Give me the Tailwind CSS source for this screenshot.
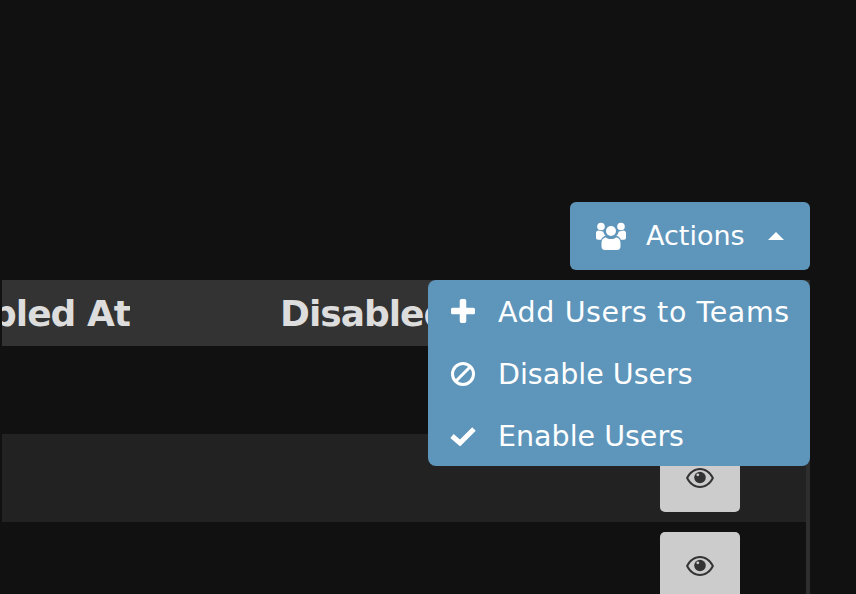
<!DOCTYPE html>
<html lang="en">
<head>
    <meta charset="UTF-8">
    <title>Users</title>
    <script src="https://cdn.jsdelivr.net/npm/@tailwindcss/browser@4"></script>
</head>
<body class="bg-[#111111] font-['DejaVu_Sans',sans-serif]">
    <div class="relative h-[594px] w-[856px] overflow-hidden pl-[2px] pr-[46px]">
        <!-- Toolbar -->
        <div class="flex justify-end pt-[202px] pb-[10px]">
            <button class="flex h-[68px] w-[240px] items-center rounded-[6px] bg-[#5e95bb] pl-[26px] text-[27px] text-white">
                <svg class="h-[28px] w-[30px]" viewBox="0 0 30 28" fill="currentColor">
                    <circle cx="5" cy="4.500" r="3.800"/>
                    <circle cx="25" cy="4.500" r="3.800"/>
                    <circle cx="15" cy="9" r="5"/>
                    <path d="M0 11c0-1.500 1-2.500 2.500-2.500 1.200 0 3 1.200 4.800 1 .3 1.800 1.200 3.300 2.400 4.300-2.300.5-3.800 2-4.500 4H2c-1.200 0-2-.8-2-2zM30 11c0-1.500-1-2.500-2.500-2.500-1.200 0-3 1.200-4.800 1-.3 1.800-1.200 3.300-2.400 4.300 2.300.5 3.800 2 4.500 4H28c1.200 0 2-.8 2-2z"/>
                    <path d="M10 15.500c1.300 1 3 1.500 5 1.500s3.700-.5 5-1.500c2.800 0 4.500 2.300 4.500 6v3c0 2-1.300 3.500-3.300 3.500H8.800c-2 0-3.300-1.500-3.300-3.500v-3c0-3.700 1.700-6 4.500-6z"/>
                </svg>
                <span class="ml-[20px]">Actions</span>
                <svg class="ml-[23px] h-[8px] w-[16px]" viewBox="0 0 16 8" fill="currentColor"><path d="M8 0l8 8H0z"/></svg>
            </button>
        </div>

        <!-- Table -->
        <div class="border-r-[4px] border-[#2e2e2e]">
            <div class="flex h-[66px] items-center bg-[#333333] pt-[2px] text-[36px] font-bold tracking-[-1px] text-[#dddddd]">
                <div class="flex w-[128px] justify-end overflow-hidden whitespace-nowrap">Enabled At</div>
                <div class="ml-[150px] whitespace-nowrap">Disabled At</div>
            </div>
            <div class="h-[88px] bg-[#111111]"></div>
            <div class="flex h-[88px] items-center bg-[#222222] pl-[658px]">
                <button class="flex h-[68px] w-[80px] items-center justify-center rounded-[5px] bg-[#cccccc] text-[#333333]">
                    <svg class="h-[20px] w-[28px]" viewBox="0 0 28 20" fill="currentColor">
                        <path fill-rule="evenodd" d="M14 0C8 0 3 3.700 0 10c3 6.300 8 10 14 10s11-3.700 14-10C25 3.700 20 0 14 0zm0 2c-4.500 0-9 2.800-11.700 8C5 15.200 9.500 18 14 18s9-2.800 11.700-8C23 4.800 18.500 2 14 2z"/>
                        <circle cx="14" cy="9.500" r="5.800"/>
                        <circle cx="11.800" cy="6.800" r="1.400" fill="#cccccc"/>
                    </svg>
                </button>
            </div>
            <div class="flex h-[88px] items-start bg-[#111111] pt-[10px] pl-[658px]">
                <button class="flex h-[68px] w-[80px] items-center justify-center rounded-[5px] bg-[#cccccc] text-[#333333]">
                    <svg class="h-[20px] w-[28px]" viewBox="0 0 28 20" fill="currentColor">
                        <path fill-rule="evenodd" d="M14 0C8 0 3 3.700 0 10c3 6.300 8 10 14 10s11-3.700 14-10C25 3.700 20 0 14 0zm0 2c-4.500 0-9 2.800-11.700 8C5 15.200 9.500 18 14 18s9-2.800 11.700-8C23 4.800 18.500 2 14 2z"/>
                        <circle cx="14" cy="9.500" r="5.800"/>
                        <circle cx="11.800" cy="6.800" r="1.400" fill="#cccccc"/>
                    </svg>
                </button>
            </div>
        </div>

        <!-- Dropdown menu -->
        <div class="absolute left-[428px] top-[280px] flex h-[186px] w-[382px] flex-col justify-center rounded-[8px] bg-[#5e95bb] text-[28.5px] text-white">
            <div class="flex h-[62px] items-center">
                <span class="flex w-[70px] justify-center">
                    <svg class="h-[24px] w-[24px]" viewBox="0 0 22 22" fill="currentColor"><path d="M8 1.500C8 .7 8.700 0 9.500 0h3c.8 0 1.500.7 1.500 1.500V8h6.500c.8 0 1.500.7 1.500 1.500v3c0 .8-.7 1.500-1.500 1.500H14v6.500c0 .8-.7 1.500-1.500 1.500h-3C8.700 22 8 21.300 8 20.500V14H1.500C.7 14 0 13.300 0 12.500v-3C0 8.700.7 8 1.500 8H8z"/></svg>
                </span>
                <span class="whitespace-nowrap pt-[4px] tracking-[0.6px]">Add Users to Teams</span>
            </div>
            <div class="flex h-[62px] items-center">
                <span class="flex w-[70px] justify-center pt-[2px]">
                    <svg class="h-[24px] w-[24px]" viewBox="0 0 24 24" fill="none" stroke="currentColor" stroke-width="3"><circle cx="12" cy="12" r="10.500"/><path d="M5 19L19 5"/></svg>
                </span>
                <span class="whitespace-nowrap pt-[4px]">Disable Users</span>
            </div>
            <div class="flex h-[62px] items-center">
                <span class="flex w-[70px] justify-center pt-[2px]">
                    <svg class="h-[20px] w-[26px]" viewBox="0 0 26 20" fill="none" stroke="currentColor" stroke-width="5"><path d="M2 10l8 7L24 3"/></svg>
                </span>
                <span class="whitespace-nowrap pt-[4px]">Enable Users</span>
            </div>
        </div>
    </div>
</body>
</html>
